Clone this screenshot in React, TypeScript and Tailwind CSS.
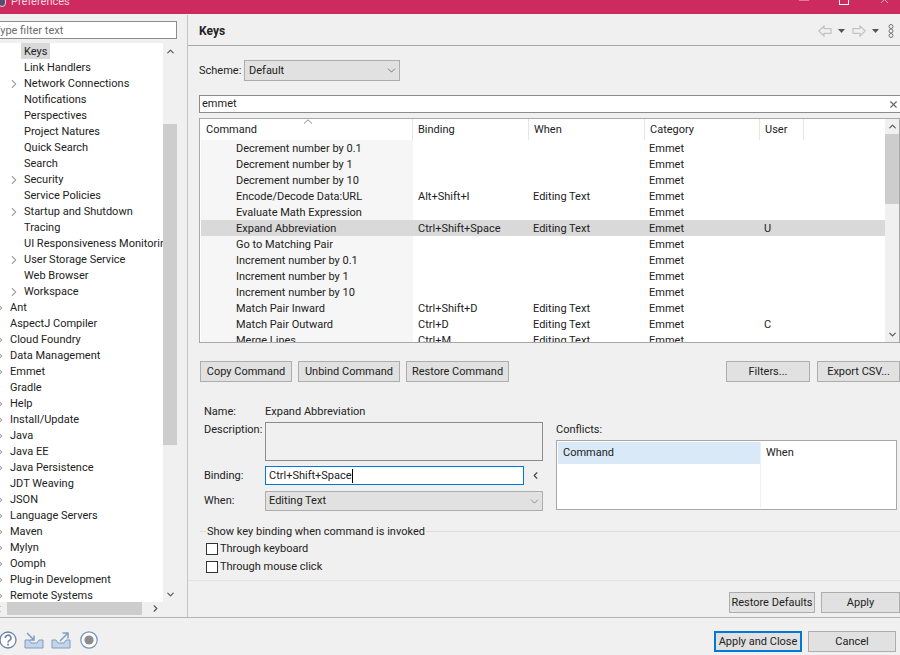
import { ChevronDown, ChevronLeft, ChevronRight, ChevronUp, X } from 'lucide-react'

const topItems = [
  { label: 'Keys', selected: true },
  { label: 'Link Handlers' },
  { label: 'Network Connections', arrow: true },
  { label: 'Notifications' },
  { label: 'Perspectives' },
  { label: 'Project Natures' },
  { label: 'Quick Search' },
  { label: 'Search' },
  { label: 'Security', arrow: true },
  { label: 'Service Policies' },
  { label: 'Startup and Shutdown', arrow: true },
  { label: 'Tracing' },
  { label: 'UI Responsiveness Monitoring' },
  { label: 'User Storage Service', arrow: true },
  { label: 'Web Browser' },
  { label: 'Workspace', arrow: true },
]

const rootItems = [
  { label: 'Ant', arrow: true },
  { label: 'AspectJ Compiler' },
  { label: 'Cloud Foundry', arrow: true },
  { label: 'Data Management', arrow: true },
  { label: 'Emmet', arrow: true },
  { label: 'Gradle' },
  { label: 'Help', arrow: true },
  { label: 'Install/Update', arrow: true },
  { label: 'Java', arrow: true },
  { label: 'Java EE', arrow: true },
  { label: 'Java Persistence', arrow: true },
  { label: 'JDT Weaving' },
  { label: 'JSON', arrow: true },
  { label: 'Language Servers', arrow: true },
  { label: 'Maven', arrow: true },
  { label: 'Mylyn', arrow: true },
  { label: 'Oomph', arrow: true },
  { label: 'Plug-in Development', arrow: true },
  { label: 'Remote Systems', arrow: true },
]

const rows = [
  ['Decrement number by 0.1', '', '', 'Emmet', ''],
  ['Decrement number by 1', '', '', 'Emmet', ''],
  ['Decrement number by 10', '', '', 'Emmet', ''],
  ['Encode/Decode Data:URL', 'Alt+Shift+I', 'Editing Text', 'Emmet', ''],
  ['Evaluate Math Expression', '', '', 'Emmet', ''],
  ['Expand Abbreviation', 'Ctrl+Shift+Space', 'Editing Text', 'Emmet', 'U'],
  ['Go to Matching Pair', '', '', 'Emmet', ''],
  ['Increment number by 0.1', '', '', 'Emmet', ''],
  ['Increment number by 1', '', '', 'Emmet', ''],
  ['Increment number by 10', '', '', 'Emmet', ''],
  ['Match Pair Inward', 'Ctrl+Shift+D', 'Editing Text', 'Emmet', ''],
  ['Match Pair Outward', 'Ctrl+D', 'Editing Text', 'Emmet', 'C'],
  ['Merge Lines', 'Ctrl+M', 'Editing Text', 'Emmet', ''],
]

function Btn({ label, className }: { label: string; className: string }) {
  return (
    <button className={'h-[21px] shrink-0 border border-[#adadad] bg-[#e1e1e1] text-center leading-[18px] whitespace-nowrap ' + className}>
      {label}
    </button>
  )
}

function Sidebar() {
  return (
    <aside className="w-[188px] shrink-0 border-r border-[#c4c4c4] bg-[#f0f0f0] flex flex-col overflow-hidden">
      <div className="h-[28px] shrink-0 pt-[6px] pr-[10px]">
        <div className="h-[18px] border-y border-r border-[#8c8c8c] bg-white pt-[1px] leading-[15px] text-[#6d6d6d] overflow-hidden whitespace-nowrap">
          <span className="block -ml-[6px]">Type filter text</span>
        </div>
      </div>
      <div className="h-[559px] shrink-0 flex pr-[10px]">
        <ul className="w-[163px] bg-white overflow-hidden">
          {topItems.map(item => (
            <li key={item.label} className="h-4 flex items-center whitespace-nowrap">
              <span className="w-[24px] shrink-0 flex justify-start pl-[7px]">
                {item.arrow && <ChevronRight size={14} strokeWidth={2} className="text-[#a6a6a6] mt-[2px] shrink-0" />}
              </span>
              <span className={item.selected ? 'bg-[#d9d9d9] h-4 px-[3px] -ml-[3px] pt-[1px] leading-[15px] shrink-0' : 'h-4 pt-[1px] leading-[15px] shrink-0'}>{item.label}</span>
            </li>
          ))}
          {rootItems.map(item => (
            <li key={item.label} className="h-4 flex items-center whitespace-nowrap">
              <span className="w-[10px] shrink-0 overflow-hidden">
                {item.arrow && <ChevronRight size={14} strokeWidth={2} className="text-[#a6a6a6] -ml-[7px] mt-[2px] shrink-0" />}
              </span>
              <span className="h-4 pt-[1px] leading-[15px] shrink-0">{item.label}</span>
            </li>
          ))}
        </ul>
        <div className="w-[14px] flex flex-col">
          <div className="h-[81px] pt-[3px] flex justify-center items-start">
            <ChevronUp size={11} strokeWidth={2.5} className="text-[#555]" />
          </div>
          <div className="h-[321px] bg-[#cdcdcd]" />
          <div className="flex-1 flex items-end justify-center pb-[2px]">
            <ChevronDown size={11} strokeWidth={2.5} className="text-[#555]" />
          </div>
        </div>
      </div>
      <div className="h-[13px] shrink-0 flex items-center">
        <ChevronLeft size={10} strokeWidth={2} className="text-[#888] -ml-[6px]" />
        <div className="w-[135px] h-[13px] ml-[3px] bg-[#cdcdcd]" />
        <ChevronRight size={11} strokeWidth={2.5} className="text-[#555] ml-[8px]" />
      </div>
    </aside>
  )
}

function KeysTable() {
  return (
    <div className="h-[225px] mt-[5px] border border-[#a8a8a8] bg-white flex overflow-hidden pl-[1px]">
      <div className="flex-1 min-w-0 overflow-hidden">
        <div className="h-[21px] flex relative">
          <div className="w-[212px] border-r border-[#e5e5e5] pl-[5px] leading-[21px]">Command</div>
          <div className="w-[116px] border-r border-[#e5e5e5] pl-[5px] leading-[21px]">Binding</div>
          <div className="w-[116px] border-r border-[#e5e5e5] pl-[5px] leading-[21px]">When</div>
          <div className="w-[115px] border-r border-[#e5e5e5] pl-[5px] leading-[21px]">Category</div>
          <div className="w-[44px] border-r border-[#e5e5e5] pl-[5px] leading-[21px]">User</div>
          <svg className="absolute left-[102px] top-[0px]" width="10" height="5" viewBox="0 0 10 5" fill="none">
            <path d="M1 4.5 5 .8l4 3.7" stroke="#8a8a8a" strokeWidth="1" />
          </svg>
        </div>
        {rows.map(r => {
          const selected = r[0] === 'Expand Abbreviation'
          return (
            <div key={r[0]} className={'h-4 flex leading-[15px] whitespace-nowrap ' + (selected ? 'bg-[#d9d9d9]' : '')}>
              <div className={'w-[212px] pt-[1px] pl-[35px] ' + (selected ? '' : 'bg-[#f6f6f6]')}>{r[0]}</div>
              <div className="w-[115px] pt-[1px] pl-[5px]">{r[1]}</div>
              <div className="w-[116px] pt-[1px] pl-[5px]">{r[2]}</div>
              <div className="w-[115px] pt-[1px] pl-[5px]">{r[3]}</div>
              <div className="w-[44px] pt-[1px] pl-[5px]">{r[4]}</div>
            </div>
          )
        })}
      </div>
      <div className="w-[14px] shrink-0 bg-[#f0f0f0] flex flex-col">
        <div className="h-[15px] flex items-center justify-center">
          <ChevronUp size={11} strokeWidth={2.5} className="text-[#555]" />
        </div>
        <div className="h-[70px] bg-[#cdcdcd]" />
        <div className="flex-1 flex items-end justify-center pb-[2px]">
          <ChevronDown size={11} strokeWidth={2.5} className="text-[#555]" />
        </div>
      </div>
    </div>
  )
}

function ToolbarIcons() {
  return (
    <div className="flex items-center pr-[6px]">
      <svg width="14" height="12" viewBox="0 0 14 12" fill="none"><path d="M.8 6 6 1v2.7h7v4.6H6V11z" stroke="#c3c3c3" strokeWidth="1.2" /></svg>
      <svg width="7" height="4" viewBox="0 0 7 4" className="ml-[6px]"><path d="M0 0h7L3.5 4z" fill="#555" /></svg>
      <svg width="14" height="12" viewBox="0 0 14 12" fill="none" className="ml-[7px]"><path d="M13.2 6 8 1v2.7H1v4.6h7V11z" stroke="#c3c3c3" strokeWidth="1.2" /></svg>
      <svg width="7" height="4" viewBox="0 0 7 4" className="ml-[6px]"><path d="M0 0h7L3.5 4z" fill="#555" /></svg>
      <svg width="6" height="14" viewBox="0 0 6 14" fill="none" stroke="#777" className="ml-[9px]"><circle cx="3" cy="2.5" r="2" /><circle cx="3" cy="7" r="2" /><circle cx="3" cy="11.5" r="2" /></svg>
    </div>
  )
}

function Footer() {
  return (
    <footer className="h-[38px] shrink-0 border-t border-[#b4b4b4] bg-[#f0f0f0] flex items-start justify-between pr-[4px]">
      <div className="flex items-center gap-[7px] -ml-[1px] pt-[13px]">
        <svg width="18" height="18" viewBox="0 0 18 18" fill="none">
          <circle cx="9" cy="9" r="8" stroke="#6b83a3" strokeWidth="1.3" fill="#fff" />
          <path d="M6.3 7a2.8 2.8 0 1 1 4.2 2.4c-1 .6-1.5 1-1.5 2.2" stroke="#6b83a3" strokeWidth="1.6" />
          <rect x="8.1" y="12.6" width="1.8" height="1.8" fill="#6b83a3" />
        </svg>
        <svg width="20" height="17" viewBox="0 0 20 17" fill="none">
          <path d="M1 8v8h18V8h-4l-2 3H7L5 8z" fill="#c5d4e8" stroke="#7e9cc4" />
          <path d="M3 1l7 7M10 3.5V8H5.5" stroke="#7e9cc4" strokeWidth="1.5" />
        </svg>
        <svg width="20" height="17" viewBox="0 0 20 17" fill="none">
          <path d="M1 8v8h18V8h-4l-2 3H7L5 8z" fill="#c5d4e8" stroke="#7e9cc4" />
          <path d="M9 9l8-8M11.5 1H17v5.5" stroke="#7e9cc4" strokeWidth="1.5" />
        </svg>
        <svg width="18" height="18" viewBox="0 0 18 18" fill="none" className="ml-[2px]">
          <circle cx="9" cy="9" r="8.2" stroke="#6f93bd" strokeWidth="1.2" fill="#fff" />
          <circle cx="9" cy="9" r="4.6" fill="#8c8c8c" />
        </svg>
      </div>
      <div className="flex gap-[6px] pt-[13px]">
        <button className="w-[88px] h-[21px] border-2 border-[#0078d7] bg-[#e1e1e1] leading-[16px] whitespace-nowrap">Apply and Close</button>
        <Btn label="Cancel" className="w-[88px]" />
      </div>
    </footer>
  )
}

export default function App() {
  return (
    <div className="w-[900px] h-[655px] overflow-hidden bg-[#f0f0f0] text-[11px] text-[#222] font-['Roboto','Liberation_Sans',sans-serif] flex flex-col">
      <header className="h-[14px] shrink-0 bg-[#cd2a5f] flex items-start overflow-hidden text-[#f5d5e0]">
        <div className="flex items-center h-[14px] -mt-[5px]">
          <span className="w-[8px] h-[10px] rounded-full bg-[#5b4a6b] border border-[#ddd] -ml-[2px]" />
          <span className="ml-[5px]">Preferences</span>
        </div>
        <div className="ml-auto flex items-start h-[14px] text-white">
          <span className="w-[10px] h-[1px] bg-[#dc7c9c]" />
          <span className="w-[10px] h-[5px] border border-t-0 border-white ml-[30px]" />
          <X size={13} strokeWidth={1.2} className="-mt-[7px] ml-[29px] mr-[9px]" />
        </div>
      </header>
      <div className="h-[1px] shrink-0 bg-[#f0f0f0]" />
      <div className="flex-1 flex min-h-0">
        <Sidebar />
        <main className="flex-1 min-w-0 flex flex-col">
          <div className="h-[31px] shrink-0 border-b border-[#a8a8a8] flex items-center justify-between pl-[11px] pt-[2px]">
            <span className="font-bold text-[12px]">Keys</span>
            <ToolbarIcons />
          </div>
          <div className="flex-1 min-h-0 pl-[11px] flex flex-col">
            <div className="flex items-center mt-[14px] h-[21px]">
              <span className="w-[45px] pt-[2px]">Scheme:</span>
              <div className="w-[156px] h-[21px] border border-[#adadad] bg-[#e1e1e1] flex items-center justify-between pl-[4px] pr-[1px]">
                <span className="pt-[2px]">Default</span>
                <ChevronDown size={13} strokeWidth={1.2} className="text-[#444]" />
              </div>
            </div>
            <div className="mt-[14px] h-[18px] border-y border-l border-[#8c8c8c] bg-white flex items-center justify-between pl-[2px] pr-[1px]">
              <span>emmet</span>
              <X size={11} strokeWidth={2.5} className="text-[#666]" />
            </div>
            <KeysTable />
            <div className="flex mt-[18px] ml-[1px]">
              <Btn label="Copy Command" className="w-[92px]" />
              <Btn label="Unbind Command" className="w-[102px] ml-[6px]" />
              <Btn label="Restore Command" className="w-[103px] ml-[6px]" />
              <div className="flex-1" />
              <Btn label="Filters..." className="w-[84px]" />
              <Btn label="Export CSV..." className="w-[83px] ml-[7px]" />
            </div>
            <div className="flex mt-[21px]">
              <div className="w-[344px] shrink-0 pl-[5px] flex flex-col">
                <div className="flex h-[19px] leading-[17px]">
                  <span className="w-[61px]">Name:</span>
                  <span>Expand Abbreviation</span>
                </div>
                <div className="flex h-[39px] leading-[16px]">
                  <span className="w-[61px]">Description:</span>
                  <div className="w-[278px] border border-[#8c8c8c]" />
                </div>
                <div className="flex items-center h-[19px] mt-[5px]">
                  <span className="w-[61px] pt-[2px]">Binding:</span>
                  <div className="w-[259px] h-[19px] border border-[#0078d7] bg-white leading-[17px] pl-[3px]">
                    Ctrl+Shift+Space<span className="inline-block w-[1px] h-[14px] bg-black align-middle" />
                  </div>
                  <ChevronLeft size={11} strokeWidth={2.5} className="text-[#444] ml-[6px]" />
                </div>
                <div className="flex items-center h-[20px] mt-[6px]">
                  <span className="w-[61px]">When:</span>
                  <div className="w-[278px] h-[20px] border border-[#adadad] bg-[#e1e1e1] flex items-center justify-between pl-[3px] pr-[1px]">
                    <span>Editing Text</span>
                    <ChevronDown size={13} strokeWidth={1.2} className="text-[#666]" />
                  </div>
                </div>
              </div>
              <div className="flex-1 pl-[13px] pr-[3px] pt-[18px] min-w-0">
                <div className="h-[19px] pt-[1px] leading-[16px]">Conflicts:</div>
                <div className="h-[70px] border border-[#a8a8a8] bg-white p-[1px] flex">
                  <div className="w-[202px] h-[22px] bg-[#d9e9f7] pl-[5px] leading-[22px]">Command</div>
                  <div className="flex-1 border-l border-[#f0f0f0] pl-[5px] leading-[22px]">When</div>
                </div>
              </div>
            </div>
            <div className="relative mt-[20px] h-[49px] border-t border-[#dcdcdc] ml-[1px] pl-[6px] pt-[7px]">
              <span className="absolute -top-[8px] left-[6px] bg-[#f0f0f0] px-[1px] leading-[16px]">Show key binding when command is invoked</span>
              <label className="flex items-center h-[19px] gap-[2px]">
                <span className="w-[12px] h-[12px] border border-[#333] bg-white" /><span className="pt-[2px]">Through keyboard</span>
              </label>
              <label className="flex items-center h-[18px] gap-[2px]">
                <span className="w-[12px] h-[12px] border border-[#333] bg-white" />Through mouse click
              </label>
            </div>
            <div className="border-t border-[#e2e2e2] -ml-[11px] flex-1 flex justify-end items-start pt-[11px] gap-[6px]">
              <Btn label="Restore Defaults" className="w-[86px]" />
              <Btn label="Apply" className="w-[79px]" />
            </div>
          </div>
        </main>
      </div>
      <Footer />
    </div>
  )
}
